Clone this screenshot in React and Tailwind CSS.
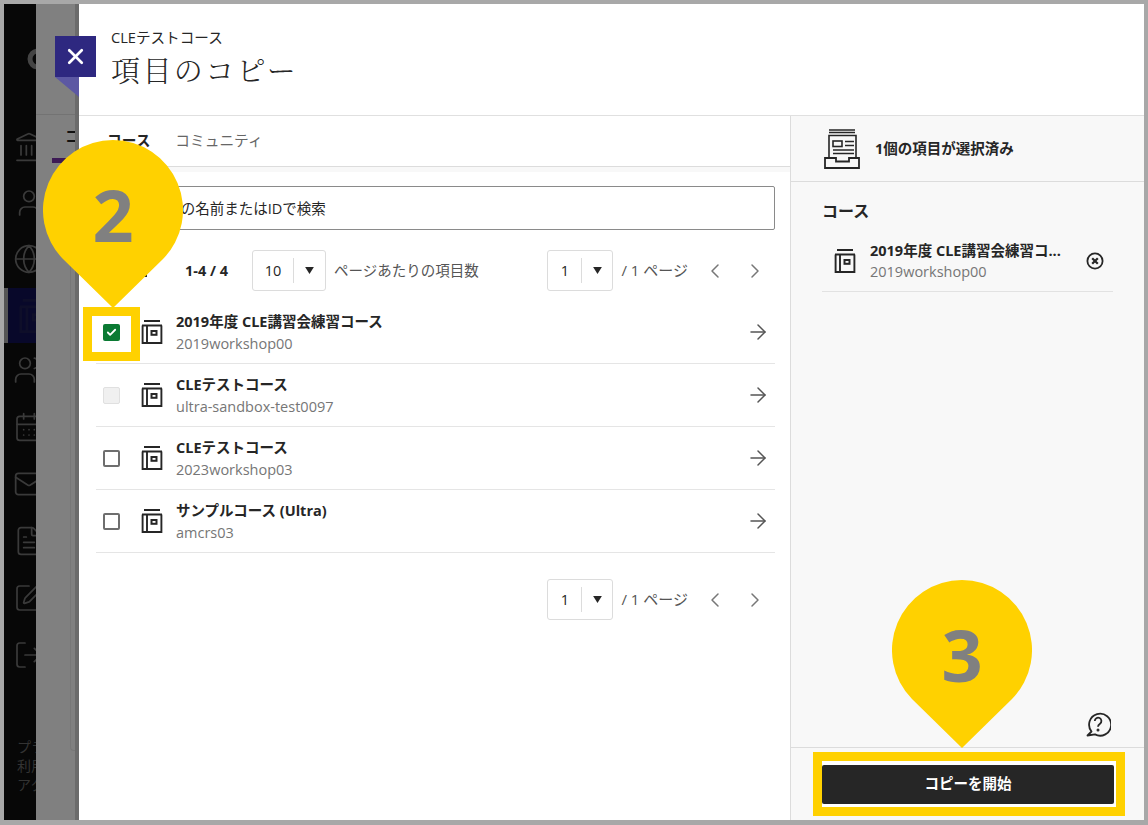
import React from "react";
import { ArrowRight, CalendarDays, ChevronLeft, ChevronRight, Globe, Landmark, LogOut, Mail, SquarePen, User, Users, FileText, Check, X } from "lucide-react";

const sans = "font-['Open_Sans','Noto_Sans_CJK_JP',sans-serif]";

const courses = [
    { title: "2019年度 CLE講習会練習コース", id: "2019workshop00", state: "checked" },
    { title: "CLEテストコース", id: "ultra-sandbox-test0097", state: "disabled" },
    { title: "CLEテストコース", id: "2023workshop03", state: "empty" },
    { title: "サンプルコース (Ultra)", id: "amcrs03", state: "empty" },
];

function CourseIcon({ className }) {
    return (
        <svg viewBox="0 0 22 24" fill="none" stroke="#262626" strokeWidth="1.9" className={className}>
            <path d="M3 1h16M1 5.5h20M1.6 5.5V23h18.8V5.5M6 5.5V23" />
            <rect x="10.5" y="11" width="5" height="3.8" strokeWidth="2" />
        </svg>
    );
}

function TrayIcon() {
    return (
        <svg viewBox="0 0 36 40" fill="none" stroke="#262626" strokeWidth="1.6" className="w-[36px] h-[40px]">
            <path d="M5 1h26M5 3.5h26" />
            <path d="M5 29V6.5h27V29" />
            <rect x="9" y="12" width="9" height="5.5" />
            <path d="M21 12.5h9M21 16.5h9M9 21h21M9 24.5h21" />
            <path d="M1 29h11v3.5h13V29h10v10H1z" strokeWidth="1.8" />
        </svg>
    );
}

function HelpIcon() {
    return (
        <svg viewBox="0 0 26 26" fill="none" stroke="#262626" strokeWidth="1.8" className="w-[26px] h-[26px]">
            <path d="M6.5 20.5A11 11 0 1 1 10 23.4L2.5 24.5z" strokeLinejoin="round" />
            <path d="M9.8 10a3.3 3.3 0 1 1 5.2 2.7c-1.3.9-2 1.5-2 3" />
            <circle cx="13" cy="19" r=".6" fill="#262626" />
        </svg>
    );
}

function CircleX() {
    return (
        <svg viewBox="0 0 18 18" fill="none" stroke="#262626" className="w-[18px] h-[18px]">
            <circle cx="9" cy="9" r="7.6" strokeWidth="1.8" />
            <path d="M6.2 6.2l5.6 5.6M11.8 6.2l-5.6 5.6" strokeWidth="2.2" />
        </svg>
    );
}

function Select({ value, width, textWidth }) {
    return (
        <div className={`flex items-center h-[41px] border border-[#dcdcdc] rounded-[3px] bg-white text-[14.5px] text-[#262626] ${width}`}>
            <span className={`text-center ${textWidth}`}>{value}</span>
            <span className="w-px h-[25px] bg-[#dcdcdc]" />
            <span className="flex-1 flex justify-center">
                <svg viewBox="0 0 10 8" className="w-[9px] h-[7px]" fill="#262626"><path d="M0 0h10L5 8z" /></svg>
            </span>
        </div>
    );
}

function Pager() {
    return (
        <div className="flex items-center">
            <Select value="1" width="w-[66px]" textWidth="w-[33px]" />
            <span className="ml-[8px] text-[15px] text-[#555]">/ 1 ページ</span>
            <ChevronLeft className="ml-[15px] w-[24px] h-[24px] text-[#777]" strokeWidth={1.5} />
            <ChevronRight className="ml-[16px] w-[24px] h-[24px] text-[#777]" strokeWidth={1.5} />
        </div>
    );
}

function Checkbox({ state }) {
    if (state === "checked") {
        return (
            <span className="flex items-center justify-center w-[17px] h-[17px] rounded-[2px] bg-[#0b7a33]">
                <Check className="w-[11px] h-[11px] text-white" strokeWidth={4} />
            </span>
        );
    }
    if (state === "disabled") {
        return <span className="block w-[17px] h-[17px] rounded-[2px] border border-[#e0e0e0] bg-[#f0f0f0]" />;
    }
    return <span className="block w-[17px] h-[17px] rounded-[2px] border-2 border-[#6e6e6e] bg-white" />;
}

function CourseRow({ course }) {
    const checked = course.state === "checked";
    return (
        <div className="flex items-center h-[63px] border-b border-[#e5e5e5]">
            <div className="relative w-[31px] flex justify-center">
                {checked && <span className="absolute left-[-13px] top-[-17px] w-[57px] h-[54px] border-[9px] border-[#ffd100] bg-white" />}
                <span className="relative"><Checkbox state={course.state} /></span>
            </div>
            <CourseIcon className="ml-[14px] w-[22px] h-[24px]" />
            <div className="ml-[13px] flex-1">
                <div className="text-[14.5px] leading-[21px] font-bold text-[#262626]">{course.title}</div>
                <div className="mt-px text-[14.5px] leading-[21px] text-[#767676]">{course.id}</div>
            </div>
            <ArrowRight className="mr-[5px] w-[24px] h-[24px] text-[#555]" strokeWidth={1.5} />
        </div>
    );
}

function Pin({ number, className }) {
    return (
        <div className={`absolute w-[140px] h-[168px] ${className}`}>
            <svg viewBox="0 0 140 168" className="absolute inset-0 w-full h-full" fill="#ffd100">
                <path d="M70 0a70 70 0 0 1 50 119L70 168 20 119A70 70 0 0 1 70 0z" />
            </svg>
            <div className="relative flex justify-center pt-[28px] text-[72px] leading-[92px] font-bold text-[#808080]">{number}</div>
        </div>
    );
}

export default function App() {
    const railIcons = [
        { Icon: Landmark, mt: "mt-[61px]" },
        { Icon: User, mt: "mt-[24px]" },
        { Icon: Globe, mt: "mt-[24px]" },
    ];
    const lowerIcons = [Users, CalendarDays, Mail, FileText, SquarePen, LogOut];

    return (
        <div className={`relative w-[1148px] h-[825px] overflow-hidden flex border-[4px] border-b-[5px] border-[#a8a8a8] bg-white ${sans}`}>
            {/* dimmed nav rail */}
            <div className="w-[32px] shrink-0 bg-[#070707] overflow-hidden flex flex-col text-[#3a3a3a]">
                <svg viewBox="0 0 22 22" fill="none" stroke="#444" strokeWidth="5" className="mt-[44px] ml-[23px] w-[22px] h-[22px] shrink-0">
                    <circle cx="11" cy="11" r="8" />
                </svg>
                {railIcons.map(({ Icon, mt }, i) => (
                    <Icon key={i} className={`${mt} ml-[9px] w-[32px] h-[32px] shrink-0`} strokeWidth={1.3} />
                ))}
                <div className="mt-[13px] h-[55px] shrink-0 border-l-[4px] border-[#555] bg-[#08082a] flex items-center">
                    <CourseIcon className="ml-[10px] w-[32px] h-[34px] shrink-0 opacity-20" />
                </div>
                {lowerIcons.map((Icon, i) => (
                    <Icon key={i} className={`${i === 0 ? "mt-[11px]" : "mt-[25px]"} ml-[9px] w-[32px] h-[32px] shrink-0`} strokeWidth={1.3} />
                ))}
                <div className="mt-[66px] ml-[13px] w-[60px] text-[14px] leading-[19px] text-[#333]">
                    <div>プライ</div>
                    <div>利用規</div>
                    <div>アクセ</div>
                </div>
            </div>

            {/* dimmed page behind the panel */}
            <div className="w-[43px] shrink-0 bg-[#808080] border-r-[4px] border-[#6b6b6b] overflow-hidden flex flex-col">
                <div className="h-[111px] border-b border-[#737373] shrink-0" />
                <div className="pl-[29px] pt-[10px] text-[15px] font-bold text-[#111] h-[43px] whitespace-nowrap">コース</div>
                <div className="ml-[16px] h-[5px] bg-[#3d1a55]" />
                <div className="flex-1 mb-[69px] ml-[34px] border-l border-b border-[#777] rounded-bl-[4px]" />
            </div>

            {/* copy panel */}
            <div className="flex-1 min-w-0 flex flex-col">
                <header className="h-[112px] shrink-0 border-b border-[#e0e0e0] pl-[32px] pt-[23px]">
                    <div className="text-[14.6px] leading-[20px] text-[#262626]">CLEテストコース</div>
                    <h1 className="mt-[6px] text-[29px] leading-[38px] tracking-[2.4px] font-['Liberation_Serif','Noto_Serif_CJK_JP','Noto_Sans_CJK_JP',serif] font-light text-[#262626]">項目のコピー</h1>
                </header>

                <div className="flex-1 min-h-0 flex">
                    <main className="w-[711px] shrink-0 flex flex-col">
                        <nav className="h-[51px] shrink-0 border-b border-[#dcdcdc] flex items-center pl-[28px] pb-[2px] text-[14.7px]">
                            <span className="font-bold text-[#262626]">コース</span>
                            <span className="ml-[25px] text-[#666]">コミュニティ</span>
                        </nav>
                        <div className="h-[5px] shrink-0 bg-[#f8f8f8]" />
                        <div className="flex-1 pl-[17px] pr-[15px]">
                            <div className="mt-[14px] h-[44px] border border-[#8a8a8a] rounded-[2px] flex items-center pl-[41px] pt-[2px] text-[14.5px] text-[#262626]">
                                コースの名前またはIDで検索
                            </div>
                            <div className="mt-[20px] flex items-center">
                                <span className="w-[51px] flex justify-end pt-[10px]"><span className="w-[3px] h-[3px] bg-[#262626]" /></span>
                                <span className="ml-[38px] text-[14.5px] font-bold text-[#262626]">1-4 / 4</span>
                                <span className="ml-[24px]"><Select value="10" width="w-[74px]" textWidth="w-[40px]" /></span>
                                <span className="ml-[8px] text-[14.5px] text-[#555]">ページあたりの項目数</span>
                                <span className="ml-auto mr-[8px]"><Pager /></span>
                            </div>
                            <div className="mt-[10px]">
                                {courses.map((c, i) => <CourseRow key={i} course={c} />)}
                            </div>
                            <div className="mt-[26px] flex justify-end pr-[8px]"><Pager /></div>
                        </div>
                    </main>

                    <aside className="flex-1 min-w-0 flex flex-col bg-[#f8f8f8] border-l border-[#dcdcdc]">
                        <div className="h-[66px] shrink-0 border-b border-[#dcdcdc] flex items-center pl-[33px]">
                            <TrayIcon />
                            <span className="ml-[15px] text-[14.5px] font-bold text-[#262626]">1個の項目が選択済み</span>
                        </div>
                        <div className="flex-1 px-[31px]">
                            <h2 className="mt-[17px] text-[16px] leading-[24px] font-bold text-[#262626]">コース</h2>
                            <div className="mt-[8px] h-[61px] border-b border-[#e2e2e2] flex items-center">
                                <CourseIcon className="ml-[12px] w-[22px] h-[24px]" />
                                <div className="ml-[14px] w-[200px]">
                                    <div className="text-[14.5px] leading-[21px] font-bold text-[#262626] whitespace-nowrap">2019年度 CLE講習会練習コ...</div>
                                    <div className="text-[14.5px] leading-[21px] text-[#767676]">2019workshop00</div>
                                </div>
                                <span className="ml-[16px]"><CircleX /></span>
                            </div>
                        </div>
                        <div className="flex justify-end pr-[33px] pb-[10px]"><HelpIcon /></div>
                        <div className="h-[73px] shrink-0 border-t border-[#dcdcdc] pl-[22px] pr-[19px] pt-[4px]">
                            <div className="h-[64px] border-[9px] border-[#ffd100] bg-white flex items-center">
                                <button className="w-[292px] h-[39px] bg-[#262626] rounded-[2px] text-white text-[14.5px] font-bold">コピーを開始</button>
                            </div>
                        </div>
                    </aside>
                </div>
            </div>

            {/* close tab hanging over the panel edge */}
            <div className="absolute left-[51px] top-[32px] w-[41px] h-[41px] bg-[#2e2880] flex items-center justify-center">
                <X className="w-[25px] h-[25px] text-white" strokeWidth={2.6} />
            </div>
            <svg viewBox="0 0 24 20" className="absolute left-[51px] top-[73px] w-[24px] h-[20px]" fill="#5c58a3"><path d="M0 0h24v20z" /></svg>

            <Pin number="2" className="left-[39px] top-[136px]" />
            <Pin number="3" className="left-[888px] top-[576px]" />
        </div>
    );
}
